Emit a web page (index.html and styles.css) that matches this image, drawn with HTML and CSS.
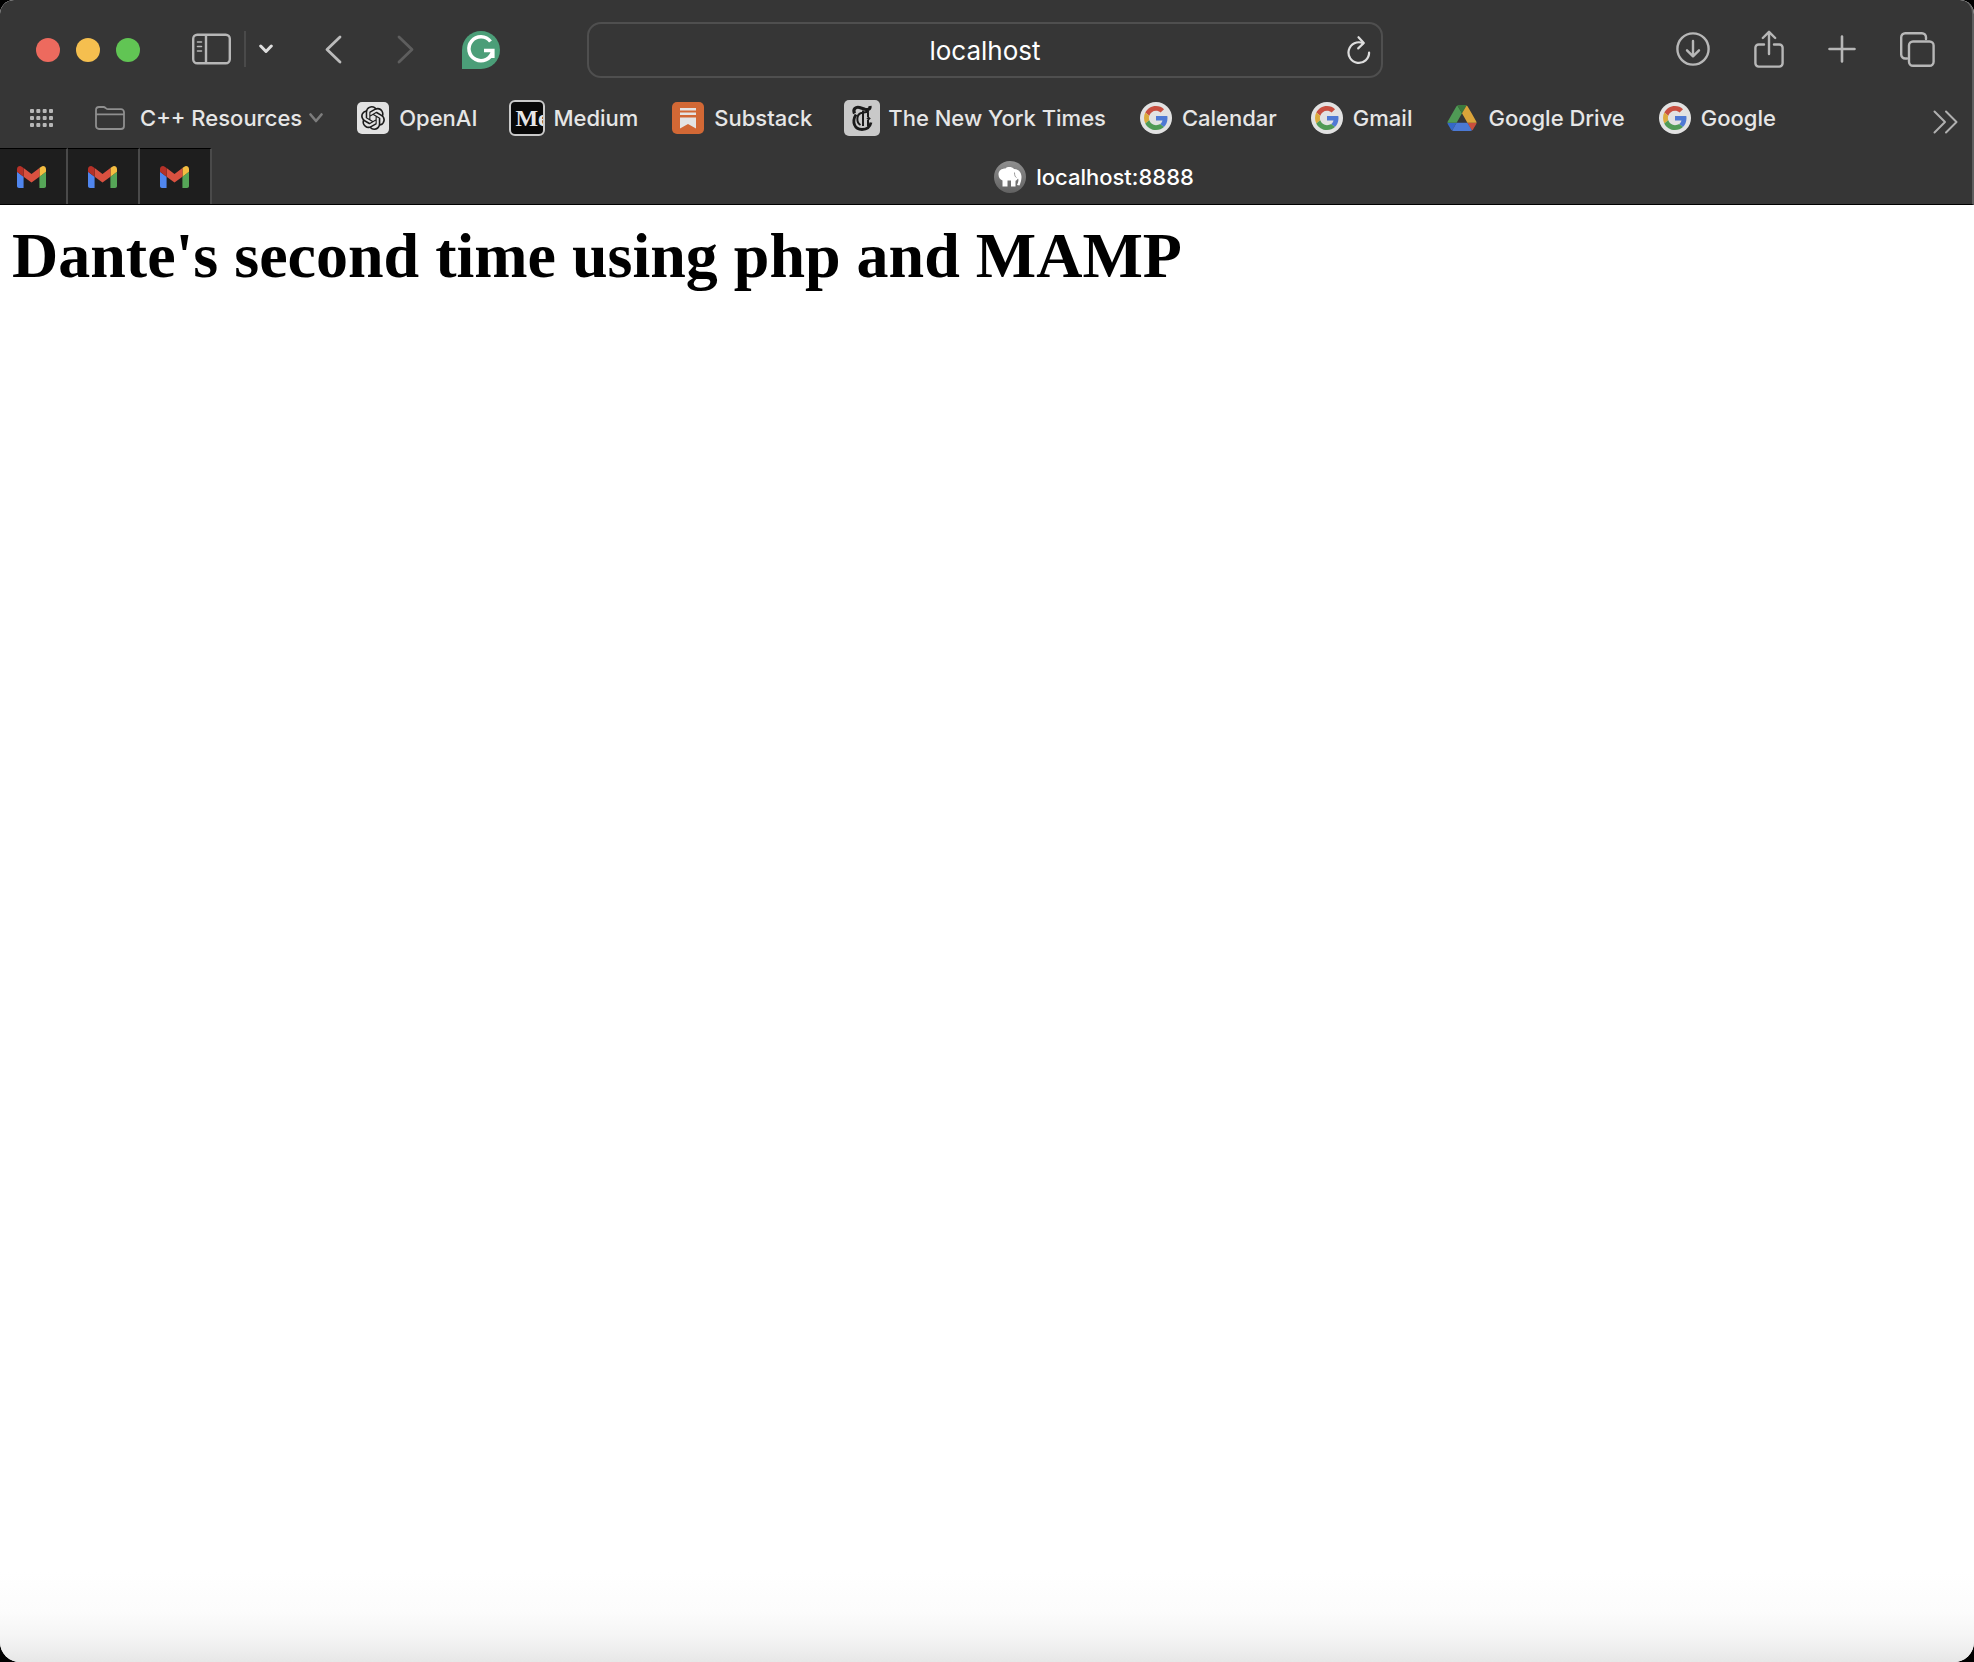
FILE: index.html
```html
<!DOCTYPE html>
<html lang="en">
<head>
<meta charset="utf-8">
<title>localhost:8888</title>
<link rel="stylesheet" href="styles.css">
</head>
<body>
<svg class="symbols" aria-hidden="true">
  <symbol id="google" viewBox="0 0 64 64">
    <circle cx="32" cy="32" r="32" fill="#e2e2e2"/>
    <g transform="translate(8 8)">
      <path fill="#c94f40" d="M24 9.5c3.54 0 6.71 1.22 9.21 3.6l6.85-6.85C35.9 2.38 30.47 0 24 0 14.62 0 6.51 5.38 2.56 13.22l7.98 6.19C12.43 13.72 17.74 9.5 24 9.5z"/>
      <path fill="#4e79d4" d="M46.98 24.55c0-1.57-.15-3.09-.38-4.55H24v9.02h12.94c-.58 2.96-2.26 5.48-4.78 7.18l7.73 6c4.51-4.18 7.09-10.36 7.09-17.65z"/>
      <path fill="#dcaa3c" d="M10.53 28.59c-.48-1.45-.76-2.99-.76-4.59s.27-3.14.76-4.59l-7.98-6.19C.92 16.46 0 20.12 0 24c0 3.88.92 7.54 2.56 10.78l7.97-6.19z"/>
      <path fill="#4f9a55" d="M24 48c6.48 0 11.93-2.13 15.89-5.81l-7.73-6c-2.15 1.45-4.92 2.3-8.16 2.3-6.26 0-11.57-4.22-13.47-9.91l-7.98 6.19C6.51 42.62 14.62 48 24 48z"/>
    </g>
  </symbol>
  <symbol id="gmail" viewBox="52 42 88 66">
    <path fill="#5086ee" d="M58 108h14V74L52 59v43c0 3.32 2.69 6 6 6"/>
    <path fill="#56a658" d="M120 108h14c3.32 0 6-2.69 6-6V59l-20 15"/>
    <path fill="#f4bd41" d="M120 48v26l20-15v-8c0-7.42-8.47-11.65-14.4-7.2"/>
    <path fill="#d95140" d="M72 74V48l24 18 24-18v26L96 92"/>
    <path fill="#b63128" d="M52 51v8l20 15V48l-5.6-4.2c-5.94-4.45-14.4-.22-14.4 7.2"/>
  </symbol>
</svg>

<div class="window">
  <header class="chrome">
    <div class="toolbar">
      <div class="toolbar-left">
        <div class="lights">
          <button class="light close" aria-label="Close"></button>
          <button class="light minimise" aria-label="Minimise"></button>
          <button class="light expand" aria-label="Full screen"></button>
        </div>
        <div class="sidebar-tools">
          <button class="icon" aria-label="Show sidebar"><svg width="39" height="32" viewBox="0 0 39 32" fill="none" stroke="#b7b7b7" stroke-width="2.4"><rect x="1.2" y="1.7" width="36.6" height="28.6" rx="4"/><path d="M14 2v28"/><path d="M5.5 9h4M5.5 13.5h4M5.5 18h4" stroke-width="1.6" stroke-linecap="round"/></svg></button>
          <span class="divider"></span>
          <button class="icon" aria-label="Tab groups"><svg width="14" height="10" viewBox="0 0 14 10" fill="none" stroke="#dedede" stroke-width="3" stroke-linecap="round" stroke-linejoin="round"><path d="M1.7 2 7 7.5 12.3 2"/></svg></button>
        </div>
        <nav class="history" aria-label="History">
          <button class="icon" aria-label="Back"><svg width="17" height="29" viewBox="0 0 17 29" fill="none" stroke="#bcbcbc" stroke-width="2.8" stroke-linecap="round" stroke-linejoin="round"><path d="M15 2 2 14.5 15 27"/></svg></button>
          <button class="icon" aria-label="Forward"><svg width="17" height="29" viewBox="0 0 17 29" fill="none" stroke="#5e5e5e" stroke-width="2.8" stroke-linecap="round" stroke-linejoin="round"><path d="M2 2 15 14.5 2 27"/></svg></button>
        </nav>
        <button class="icon" aria-label="Grammarly"><svg width="38" height="38" viewBox="0 0 38 38"><path fill="#4b9e78" d="M0 38V19A19 19 0 1 1 19 38Z"/><path d="M28.5 10.5A12 12 0 1 0 30.600 20.5M22 19.500H30.800V27" fill="none" stroke="#fff" stroke-width="3.6"/></svg></button>
      </div>

      <div class="address">
        <input class="address-field" type="text" value="localhost" aria-label="Address">
        <button class="icon" aria-label="Reload"><svg width="24" height="30" viewBox="0 0 24 30" fill="none" stroke="#dedede" stroke-width="2.2" stroke-linecap="round" stroke-linejoin="round"><path d="M16 8.2A10.3 10.3 0 1 0 22.1 17.5"/><path d="M11.5 2.2 16.8 8 11.2 13.4"/></svg></button>
      </div>

      <div class="toolbar-right">
        <button class="icon" aria-label="Downloads"><svg width="34" height="34" viewBox="0 0 34 34" fill="none" stroke="#b7b7b7" stroke-width="2.4" stroke-linecap="round" stroke-linejoin="round"><circle cx="17" cy="17" r="15.6"/><path d="M17 9v15M11 18.3l6 6 6-6"/></svg></button>
        <button class="icon" aria-label="Share"><svg width="30" height="38" viewBox="0 0 30 38" fill="none" stroke="#b7b7b7" stroke-width="2.4" stroke-linecap="round" stroke-linejoin="round"><path d="M10 14.500H4.700A3.300 3.300 0 0 0 1.400 17.800V33.300A3.300 3.300 0 0 0 4.700 36.600H25.300A3.300 3.300 0 0 0 28.600 33.300V17.800A3.300 3.300 0 0 0 25.300 14.500H20"/><path d="M15 24V2M8.800 8 15 1.800 21.200 8"/></svg></button>
        <button class="icon" aria-label="New tab"><svg width="28" height="28" viewBox="0 0 28 28" fill="none" stroke="#b7b7b7" stroke-width="2.6" stroke-linecap="round"><path d="M14 1.500v25M1.500 14h25"/></svg></button>
        <button class="icon" aria-label="Tab overview"><svg width="35" height="35" viewBox="0 0 35 35" fill="none" stroke="#b7b7b7" stroke-width="2.4" stroke-linecap="round"><rect x="9" y="9.500" width="24.600" height="24.200" rx="4"/><path d="M7 26.500H5.200A4 4 0 0 1 1.200 22.500V5.200A4 4 0 0 1 5.200 1.200H22A4 4 0 0 1 26 5.200V7"/></svg></button>
      </div>
    </div>

    <nav class="bookmarks" aria-label="Favourites">
      <button class="icon" aria-label="Start page"><svg width="23" height="18" viewBox="0 0 23 18" fill="#b7b7b7"><g id="dots"><rect width="4" height="4" rx="1"/><rect x="6.300" width="4" height="4" rx="1"/><rect x="12.700" width="4" height="4" rx="1"/><rect x="19" width="4" height="4" rx="1"/></g><use href="#dots" y="7"/><use href="#dots" y="14"/></svg></button>
      <button class="folder">
        <svg width="30" height="24" viewBox="0 0 30 24" fill="none" stroke="#8f8f8f" stroke-width="1.800"><path d="M1 20V4A3 3 0 0 1 4 1H8.500C10.500 1 11 3.200 13 3.200H26A3 3 0 0 1 29 6.200V20A3 3 0 0 1 26 23H4A3 3 0 0 1 1 20ZM1 8.300H29"/></svg>
        <span>C++ Resources</span>
        <svg class="caret" width="14" height="10" viewBox="0 0 14 10" fill="none" stroke="#7d7d7d" stroke-width="2.600" stroke-linecap="round" stroke-linejoin="round"><path d="M1.500 1.500 7 8 12.500 1.500"/></svg>
      </button>
      <a class="bookmark" href="#"><svg width="32" height="32" viewBox="0 0 32 32"><rect width="32" height="32" rx="5" fill="#e2e2e2"/><path fill="#1b1b1b" transform="translate(4 4)" d="M22.2819 9.8211a5.9847 5.9847 0 0 0-.5157-4.9108 6.0462 6.0462 0 0 0-6.5098-2.9A6.0651 6.0651 0 0 0 4.9807 4.1818a5.9847 5.9847 0 0 0-3.9977 2.9 6.0462 6.0462 0 0 0 .7427 7.0966 5.98 5.98 0 0 0 .511 4.9107 6.051 6.051 0 0 0 6.5146 2.9001A5.9847 5.9847 0 0 0 13.2599 24a6.0557 6.0557 0 0 0 5.7718-4.2058 5.9894 5.9894 0 0 0 3.9977-2.9001 6.0557 6.0557 0 0 0-.7475-7.0729zm-9.022 12.6081a4.4755 4.4755 0 0 1-2.8764-1.0408l.1419-.0804 4.7783-2.7582a.7948.7948 0 0 0 .3927-.6813v-6.7369l2.02 1.1686a.071.071 0 0 1 .038.0615v5.5826a4.504 4.504 0 0 1-4.4945 4.4944zm-9.6607-4.1254a4.4708 4.4708 0 0 1-.5346-3.0137l.142.0852 4.783 2.7582a.7712.7712 0 0 0 .7806 0l5.8428-3.3685v2.3324a.0804.0804 0 0 1-.0332.0615L9.74 19.9502a4.4992 4.4992 0 0 1-6.1408-1.6464zM2.3408 7.8956a4.485 4.485 0 0 1 2.3655-1.9728V11.6a.7664.7664 0 0 0 .3879.6765l5.8144 3.3543-2.0201 1.1685a.0757.0757 0 0 1-.071 0l-4.8303-2.7865A4.504 4.504 0 0 1 2.3408 7.872zm16.5963 3.8558L13.1038 8.364 15.1192 7.2a.0757.0757 0 0 1 .071 0l4.8303 2.7913a4.4944 4.4944 0 0 1-.6765 8.1042v-5.6772a.79.79 0 0 0-.407-.667zm2.0107-3.0231l-.142-.0852-4.7735-2.7818a.7759.7759 0 0 0-.7854 0L9.409 9.2297V6.8974a.0662.0662 0 0 1 .0284-.0615l4.8303-2.7866a4.4992 4.4992 0 0 1 6.6802 4.66zM8.3065 12.863l-2.02-1.1638a.0804.0804 0 0 1-.038-.0567V6.0742a4.4992 4.4992 0 0 1 7.3757-3.4537l-.142.0805L8.704 5.459a.7948.7948 0 0 0-.3927.6813zm1.0976-2.3654l2.602-1.4998 2.6069 1.4998v2.9994l-2.5974 1.4997-2.6067-1.4997Z"/></svg><span>OpenAI</span></a>
      <a class="bookmark" href="#"><span class="tile medium">Me</span><span>Medium</span></a>
      <a class="bookmark" href="#"><svg width="32" height="32" viewBox="0 0 32 32"><rect width="32" height="32" rx="5" fill="#d26835"/><path fill="#e4e4e4" d="M8 6h16v2.500H8zM8 10.500h16V13H8zM8 15.500h16V26.500L16 22 8 26.500z"/></svg><span>Substack</span></a>
      <a class="bookmark" href="#"><svg class="tile" width="36" height="36" viewBox="0 0 36 36"><rect width="36" height="36" rx="5" fill="#c9c9c9"/><g fill="none" stroke="#1b1b1b"><path d="M10.500 13.500C8.500 9 12 6.500 15.500 7.500L21 9.300C24 10.200 26.500 9 26 6" stroke-width="3.200"/><path d="M12 14.500C7.500 22 10.500 29.500 18 29.500 23 29.500 26 27 27 22.500" stroke-width="2.800"/><path d="M17 13C12.500 14.500 12 22.500 16.500 25M19 10.500V26M17 13 25 11.500M24 12V17M24 20V26.500" stroke-width="2"/></g><path fill="#1b1b1b" d="M22.500 18.500 24.500 16.500 26.800 18.500 24.500 20.500z"/></svg><span>The New York Times</span></a>
      <a class="bookmark" href="#"><svg width="32" height="32"><use href="#google"/></svg><span>Calendar</span></a>
      <a class="bookmark" href="#"><svg width="32" height="32"><use href="#google"/></svg><span>Gmail</span></a>
      <a class="bookmark" href="#"><svg width="32" height="28" viewBox="-3 -3 93.300 84"><path fill="#3468c8" d="m6.600 66.850 3.850 6.650c.8 1.400 1.950 2.500 3.300 3.300l13.750-23.800h-27.500c0 1.550.4 3.100 1.200 4.500z"/><path fill="#4f9a55" d="m43.650 25-13.750-23.800c-1.350.8-2.500 1.900-3.300 3.300l-25.400 44a9.060 9.060 0 0 0 -1.200 4.500h27.500z"/><path fill="#c94f3d" d="m73.550 76.800c1.350-.8 2.500-1.900 3.300-3.300l1.600-2.750 7.650-13.250c.8-1.400 1.200-2.950 1.200-4.500h-27.502l5.852 11.500z"/><path fill="#3b783d" d="m43.650 25 13.750-23.800c-1.350-.8-2.900-1.200-4.500-1.200h-18.500c-1.600 0-3.150.45-4.500 1.200z"/><path fill="#4b79d4" d="m59.800 53h-32.300l-13.750 23.800c1.350.8 2.900 1.200 4.500 1.200h50.800c1.600 0 3.150-.45 4.500-1.200z"/><path fill="#dba43a" d="m73.400 26.500-12.700-22c-.8-1.400-1.950-2.500-3.300-3.300l-13.750 23.800 16.150 28h27.450c0-1.550-.4-3.100-1.200-4.500z"/></svg><span>Google Drive</span></a>
      <a class="bookmark" href="#"><svg width="32" height="32"><use href="#google"/></svg><span>Google</span></a>
      <button class="icon more" aria-label="More favourites"><svg width="25" height="24" viewBox="0 0 25 24" fill="none" stroke="#b0b0b0" stroke-width="2" stroke-linecap="round" stroke-linejoin="round"><path d="M1.500 1.500 12 12 1.500 22.500M13 1.500 23.500 12 13 22.500"/></svg></button>
    </nav>

    <div class="tabs">
      <button class="pinned" aria-label="Gmail"><svg width="29" height="22"><use href="#gmail"/></svg></button>
      <button class="pinned" aria-label="Gmail"><svg width="29" height="22"><use href="#gmail"/></svg></button>
      <button class="pinned" aria-label="Gmail"><svg width="29" height="22"><use href="#gmail"/></svg></button>
      <button class="tab">
        <svg width="32" height="32" viewBox="0 0 32 32"><defs><linearGradient id="disc" x2="0" y2="1"><stop stop-color="#8f8f8f"/><stop offset="1" stop-color="#626262"/></linearGradient></defs><circle cx="16" cy="16" r="16" fill="url(#disc)"/><path fill="#fff" d="M4.500 13.500C4.500 9.500 7.500 7.500 11.500 7.500 13 5.500 18 5.500 20 8 24.500 8 27.500 11.500 27.500 16 27.500 19 26.500 22 25.500 24.500L23 24C24.500 21 24.800 18.500 24 17.500 23 19 22 19.500 21.500 20V25.500H17V19.500H13.500V25.500H8.500V19.500C6 18.500 4.500 16.500 4.500 13.500Z"/><path d="M20.500 11.500C20.500 14 21 16 22.500 16.500" fill="none" stroke="#999" stroke-width="1"/></svg>
        <span>localhost:8888</span>
      </button>
    </div>
  </header>

  <main class="page">
    <h1>Dante's second time using php and MAMP</h1>
  </main>
</div>
</body>
</html>
```
FILE: styles.css
```css
* {
  box-sizing: border-box;
}

body {
  margin: 0;
  background: #000;
  font-family: Inter, "Liberation Sans", sans-serif;
}

button {
  margin: 0;
  padding: 0;
  border: 0;
  background: none;
  color: inherit;
  font: inherit;
}

svg {
  display: block;
  flex: none;
}

.symbols {
  display: none;
}

.window {
  display: flex;
  flex-direction: column;
  min-height: 100vh;
  overflow: hidden;
  border-radius: 14px 14px 20px 20px;
  background: #fff;
}

.chrome {
  border-right: 2px solid #5e5e5e;
  border-bottom: 1px solid #000;
  border-radius: 14px 14px 0 0;
  background: #363636;
  color: #e6e6e6;
  font-size: 22px;
  font-weight: 500;
  line-height: 28px;
}

.toolbar {
  display: grid;
  grid-template-columns: 587fr 796fr 589fr;
  align-items: center;
  height: 100px;
}

.toolbar-left,
.toolbar-right,
.lights,
.sidebar-tools,
.history,
.address,
.bookmarks,
.folder,
.bookmark,
.tabs,
.tab,
.pinned {
  display: flex;
  align-items: center;
}

.toolbar-left {
  gap: 48px;
  padding-left: 36px;
}

.lights {
  gap: 16px;
  margin-right: 4px;
}

.light {
  width: 24px;
  height: 24px;
  border-radius: 50%;
}

.close {
  background: #ed6a5e;
}

.minimise {
  background: #f5bf4f;
}

.expand {
  background: #61c554;
}

.sidebar-tools,
.history,
.toolbar-right {
  padding-bottom: 2px;
}

.sidebar-tools {
  gap: 13px;
  margin-right: 4px;
}

.divider {
  width: 2px;
  height: 36px;
  background: #4a4a4a;
}

.history {
  gap: 55px;
}

.address {
  height: 56px;
  padding: 0 10px 0 34px;
  border: 2px solid #4f4f4f;
  border-radius: 14px;
}

.address-field {
  flex: 1;
  min-width: 0;
  padding: 2px 0 0;
  border: 0;
  outline: 0;
  background: none;
  color: #fff;
  font: inherit;
  font-size: 26px;
  font-weight: 400;
  line-height: 32px;
  text-align: center;
}

.toolbar-right {
  justify-content: flex-end;
  gap: 44px;
  padding-right: 37px;
}

.bookmarks {
  gap: 34px;
  height: 48px;
  padding: 0 14px 12px 30px;
  white-space: nowrap;
}

.folder {
  gap: 15px;
  margin-left: 8px;
}

.caret {
  margin-left: -8px;
}

.bookmark {
  gap: 10px;
  color: inherit;
  text-decoration: none;
}

.tile {
  flex: none;
  width: 36px;
  height: 36px;
  margin: 0 -2px;
}

.medium {
  overflow: hidden;
  padding-left: 4px;
  border: 2px solid #c9c9c9;
  border-radius: 6px;
  background: #080808;
  font-family: "Liberation Serif", serif;
  font-size: 24px;
  font-weight: 700;
  line-height: 32px;
}

.more {
  margin-left: auto;
  padding-top: 8px;
}

.tabs {
  height: 56px;
}

.pinned {
  justify-content: center;
  width: 72px;
  height: 56px;
  padding-right: 2px;
  border-top: 1px solid #000;
  border-right: 2px solid #4a4a4a;
  background: #1e1e1e;
}

.pinned:first-child {
  width: 68px;
  padding-right: 4px;
}

.tab {
  flex: 1;
  justify-content: center;
  gap: 10px;
  padding: 2px 0 0 4px;
  color: #fff;
}

.page {
  flex: 1;
  padding: 15px 12px 90px;
  background: linear-gradient(to top, #e7e7e7, #f5f5f5 26px, #fcfcfc 50px, #fff 90px);
}

h1 {
  margin: 0;
  color: #000;
  font-family: "Liberation Serif", serif;
  font-size: 64px;
  font-weight: 700;
  line-height: 72px;
}
```
